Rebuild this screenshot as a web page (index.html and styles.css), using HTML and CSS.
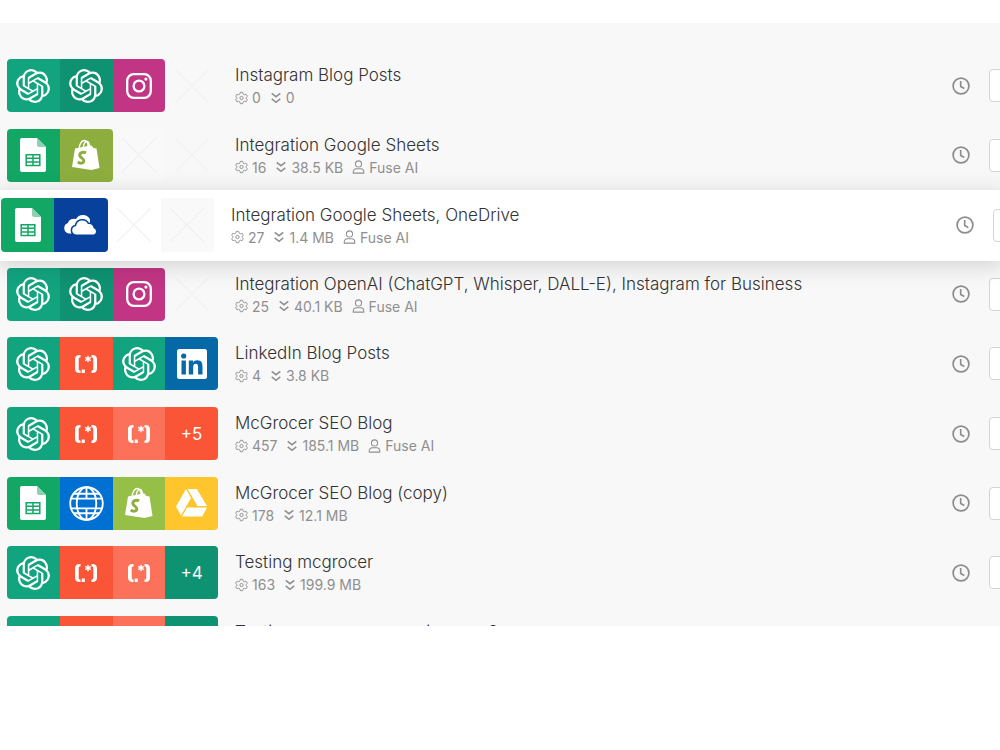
FILE: index.html
```
<!DOCTYPE html>
<html lang="en">
  <head>
    <meta charset="utf-8">
    <title>Scenarios</title>
    <link rel="stylesheet" href="styles.css">
  </head>
  <body>
    <svg class="sprite" aria-hidden="true">
      <symbol id="openai" viewBox="0 0 24 24">
        <path d="M22.28 9.82a5.98 5.98 0 0 0-.52-4.91 6.05 6.05 0 0 0-6.51-2.9A6.07 6.07 0 0 0 4.98 4.18a5.98 5.98 0 0 0-4 2.9 6.05 6.05 0 0 0 .74 7.1 5.98 5.98 0 0 0 .51 4.91 6.05 6.05 0 0 0 6.51 2.9A5.98 5.98 0 0 0 13.26 24a6.06 6.06 0 0 0 5.77-4.21 5.99 5.99 0 0 0 4-2.9 6.06 6.06 0 0 0-.75-7.07zm-9.02 12.61a4.48 4.48 0 0 1-2.88-1.04l.14-.08 4.78-2.76a.8.8 0 0 0 .39-.68v-6.74l2.02 1.17a.07.07 0 0 1 .04.05v5.58a4.5 4.5 0 0 1-4.49 4.5zM3.6 18.3a4.47 4.47 0 0 1-.54-3.01l.14.08 4.78 2.76a.77.77 0 0 0 .78 0l5.84-3.37v2.33a.08.08 0 0 1-.03.06L9.74 19.95a4.5 4.5 0 0 1-6.14-1.65zM2.34 7.9a4.49 4.49 0 0 1 2.37-1.98v5.68a.77.77 0 0 0 .39.68l5.81 3.35-2.02 1.17a.08.08 0 0 1-.07 0l-4.83-2.79A4.5 4.5 0 0 1 2.34 7.87zm16.6 3.86L13.1 8.36 15.12 7.2a.08.08 0 0 1 .07 0l4.83 2.79a4.49 4.49 0 0 1-.68 8.1v-5.68a.79.79 0 0 0-.4-.65zm2.01-3.02l-.14-.09-4.77-2.78a.78.78 0 0 0-.79 0L9.41 9.23V6.9a.07.07 0 0 1 .03-.06l4.83-2.79a4.5 4.5 0 0 1 6.68 4.66zM8.31 12.86l-2.02-1.16a.08.08 0 0 1-.04-.06V6.07a4.5 4.5 0 0 1 7.38-3.45l-.14.08L8.7 5.46a.8.8 0 0 0-.39.68zm1.1-2.36L12.01 9l2.61 1.5v3L12.02 15l-2.61-1.5z"/>
      </symbol>
      <symbol id="instagram" viewBox="0 0 26 26">
        <rect x="1.2" y="1.2" width="23.6" height="23.6" rx="6.5" fill="none" stroke="#fff" stroke-width="2.3"/>
        <circle cx="13" cy="13" r="5.4" fill="none" stroke="#fff" stroke-width="2.3"/>
        <circle cx="19.9" cy="6.1" r="1.6"/>
      </symbol>
      <symbol id="sheets" viewBox="0 0 26 34">
        <path d="M2 0h15l9 9v23a2 2 0 0 1-2 2H2a2 2 0 0 1-2-2V2a2 2 0 0 1 2-2z"/>
        <path d="M17 0l9 9h-7a2 2 0 0 1-2-2z" fill="#8ed1b1"/>
        <path d="M6.2 16.7h13.6v10.8H6.2zM6.2 20.3h13.6M6.2 23.9h13.6M13 16.7v10.8" fill="none" stroke="#12a765" stroke-width="1.5"/>
      </symbol>
      <symbol id="shopify" viewBox="0 0 28 32">
        <path d="M3 9.5l16.2-3.3L21.5 9l3 .5L27.5 29l-8 2L0 28z"/>
        <path d="M7 9.5C7.5 4.5 10 1.5 12.2 1.5c2.4 0 3.8 3 4 6.2M11.2 8.5c.5-4 2.2-6 3.8-6s2.3 2.6 2.4 5" fill="none" stroke="#fff" stroke-width="1.4"/>
        <path d="M14 13.8c-3.2-1.6-6.4 0-6.2 2.6.2 2.7 4.2 2.9 4 5.6-.2 2.5-3.6 2.8-6 1" fill="none" stroke="#8dae3f" stroke-width="3"/>
      </symbol>
      <symbol id="onedrive" viewBox="0 0 36 22">
        <path d="M5.5 19.5A5.5 5.5 0 0 1 4.8 9 6.5 6.5 0 0 1 13 5 8 8 0 0 1 27 5.5v8l-10 6z"/>
        <path d="M13 21.2a4.9 4.9 0 0 1-.6-9.7 7 7 0 0 1 13-2.2 5.4 5.4 0 0 1 5.8 4.2 4.1 4.1 0 0 1-.2 7.7z" stroke="#07419c" stroke-width="1.5"/>
      </symbol>
      <symbol id="regex" viewBox="0 0 24 18">
        <path d="M6.5 0v2.6c-1.4 0-1.8.6-1.8 2v8.8c0 1.400.4 2 1.800 2V18C2.700 18 1 16.800 1 13.500v-9C1 1.200 2.700 0 6.500 0zM17.500 0v2.600c1.400 0 1.800.6 1.800 2v8.800c0 1.400-.4 2-1.800 2V18c3.800 0 5.500-1.200 5.500-4.500v-9C23 1.200 21.300 0 17.500 0zM7.700 14.500h3.100V18H7.700z"/>
        <path d="M14 .8v6.400M11.200 2.400l5.600 3.200M16.800 2.400l-5.600 3.200" stroke="#fff" stroke-width="1.400"/>
      </symbol>
      <symbol id="linkedin" viewBox="0 0 30 30">
        <rect width="30" height="30" rx="2.5"/>
        <path d="M4.5 11.5h4.4v14H4.5zM11.8 11.5H16v2c.8-1.4 2.3-2.3 4.3-2.3 4.3 0 5.2 2.8 5.2 6.6v7.7h-4.4v-6.9c0-1.9-.2-3.8-2.4-3.8s-2.5 1.8-2.5 3.7v7h-4.4z" fill="#0568a7"/>
        <circle cx="6.7" cy="7" r="2.6" fill="#0568a7"/>
      </symbol>
      <symbol id="globe" viewBox="0 0 34 34">
        <g fill="none" stroke="#fff" stroke-width="1.8">
          <circle cx="17" cy="17" r="15.8"/>
          <ellipse cx="17" cy="17" rx="9.5" ry="15.8"/>
          <path d="M17 1v11M17 22v11M4.500 7.500h25M1.500 12.200h31M1.500 21.800h31M4.500 26.500h25"/>
        </g>
      </symbol>
      <symbol id="drive" viewBox="0 0 31 28">
        <path d="M10 0L0 17.5 5 26.5 15 9zM11.6 0h9.2L31 17H21.5zM11.2 18.6H31L26.2 27.5H6z"/>
      </symbol>
      <symbol id="cross" viewBox="0 0 32 32">
        <path d="M0 0l32 32M32 0L0 32" fill="none" stroke="#f0f0f0" stroke-width="1"/>
      </symbol>
      <symbol id="gear" viewBox="0 0 16 16">
        <path d="M6.5 1h3l.5 2.2 1.5.9 2.2-.7 1.5 2.6-1.7 1.5v1l1.7 1.5-1.5 2.6-2.2-.7-1.5.9-.5 2.2h-3L6 12.800l-1.500-.9-2.200.7L.8 10l1.700-1.500v-1L.8 6l1.500-2.600 2.200.7L6 3.200z" fill="none" stroke="currentColor" stroke-width="1.1" stroke-linejoin="round"/>
        <circle cx="8" cy="8" r="2" fill="none" stroke="currentColor" stroke-width="1.2"/>
      </symbol>
      <symbol id="transfer" viewBox="0 0 12 14">
        <path d="M1 1.500l5 4 5-4M1 8l5 4 5-4" fill="none" stroke="currentColor" stroke-width="1.800"/>
      </symbol>
      <symbol id="user" viewBox="0 0 14 16">
        <circle cx="7" cy="4.500" r="3.500" fill="none" stroke="currentColor" stroke-width="1.2"/>
        <path d="M1 15v-1.500a3.500 3.500 0 0 1 3.500-3.500h5a3.500 3.500 0 0 1 3.500 3.500V15z" fill="none" stroke="currentColor" stroke-width="1.2"/>
      </symbol>
      <symbol id="clock" viewBox="0 0 18 18">
        <circle cx="9" cy="9" r="7.900" fill="none" stroke="currentColor" stroke-width="1.700"/>
        <path d="M8.700 4v5.500l3.600 2" fill="none" stroke="currentColor" stroke-width="1.600"/>
      </symbol>
    </svg>

    <main class="scenarios">
      <ul class="list" id="list"></ul>
    </main>

    <script src="script.js"></script>
  </body>
</html>
```

FILE: styles.css
```
* {
  box-sizing: border-box;
}

body {
  margin: 0;
  background-color: #fff;
  font-family: Inter, "Liberation Sans", sans-serif;
  color: #333;
}

.sprite {
  display: none;
}

/* the last row is cut by the panel */
.scenarios {
  max-height: 603px;
  margin-top: 23px;
  padding-top: 28px;
  overflow: hidden;
  background-color: #f8f8f8;
}

.list {
  display: grid;
  grid-auto-rows: 1fr;
  height: 626px;
  margin: 0;
  padding: 0;
  list-style: none;
}

.row {
  display: flex;
  align-items: center;
  padding-left: 7px;
}

.row.active {
  position: relative;
  margin: 0 -4px -1px;
  padding-left: 5px;
  background-color: #fff;
  box-shadow: 0 4px 24px rgba(0, 0, 0, 0.16);
}

.apps {
  display: grid;
  grid-template-columns: repeat(4, 1fr);
  flex: none;
  width: 211px;
  height: 53px;
}

.active .apps {
  width: 213px;
  height: 54px;
}

.app {
  display: flex;
  align-items: center;
  justify-content: center;
  color: #fff;
  font-size: 17px;
}

.app svg {
  fill: #fff;
}

.app:first-child {
  border-radius: 4px 0 0 4px;
}

.app.last {
  border-radius: 0 4px 4px 0;
}

.openai { background-color: #12a37f; }
.openai-dark { background-color: #0f9272; }
.instagram { background-color: #c13584; }
.sheets { background-color: #12a765; }
.shopify { background-color: #8dae3f; }
.shopify-light { background-color: #96bf48; }
.onedrive { background-color: #07419c; }
.regex { background-color: #fa5537; }
.regex-light { background-color: #fb7159; }
.linkedin { background-color: #0568a7; }
.globe { background-color: #0070d2; }
.drive { background-color: #ffc52c; }
.empty-light { background-color: #f9f9f9; }

.info {
  flex: 1;
  min-width: 0;
  padding-left: 17px;
}

.title {
  margin: 0;
  font-size: 17px;
  font-weight: 300;
  line-height: 24px;
  white-space: nowrap;
}

.meta {
  display: flex;
  gap: 9px;
  min-height: 21px;
  color: #8f8f8f;
  font-size: 14px;
  line-height: 21px;
}

.meta span {
  display: flex;
  align-items: center;
  gap: 4px;
}

.clock {
  flex: none;
  margin-right: 19px;
  color: #8c8c8c;
}

.toggle {
  flex: none;
  width: 60px;
  height: 33px;
  margin-right: -49px;
  padding: 0;
  border: 1px solid #d4d4d4;
  border-radius: 4px;
  background-color: #fff;
}
```

FILE: script.js
```
const sizes = {
  openai: [34, 34],
  instagram: [26, 26],
  sheets: [26, 34],
  shopify: [28, 32],
  onedrive: [36, 22],
  regex: [24, 18],
  linkedin: [30, 30],
  globe: [35, 35],
  drive: [31, 28],
  cross: [34, 34],
  gear: [13, 14],
  transfer: [12, 12],
  user: [13, 14],
  clock: [18, 18]
};

const scenarios = [
  { title: 'Instagram Blog Posts', apps: ['openai', 'openai-dark', 'instagram', 'empty'], ops: '0', size: '0' },
  { title: 'Integration Google Sheets', apps: ['sheets', 'shopify', 'empty-light', 'empty'], ops: '16', size: '38.5 KB', user: 'Fuse AI' },
  { title: 'Integration Google Sheets, OneDrive', apps: ['sheets', 'onedrive', 'empty', 'empty-light'], ops: '27', size: '1.4 MB', user: 'Fuse AI', active: true },
  { title: 'Integration OpenAI (ChatGPT, Whisper, DALL-E), Instagram for Business', apps: ['openai', 'openai-dark', 'instagram', 'empty'], ops: '25', size: '40.1 KB', user: 'Fuse AI' },
  { title: 'LinkedIn Blog Posts', apps: ['openai', 'regex', 'openai', 'linkedin'], ops: '4', size: '3.8 KB' },
  { title: 'McGrocer SEO Blog', apps: ['openai', 'regex', 'regex-light', 'regex'], more: '+5', ops: '457', size: '185.1 MB', user: 'Fuse AI' },
  { title: 'McGrocer SEO Blog (copy)', apps: ['sheets', 'globe', 'shopify-light', 'drive'], ops: '178', size: '12.1 MB' },
  { title: 'Testing mcgrocer', apps: ['openai', 'regex', 'regex-light', 'openai-dark'], more: '+4', ops: '163', size: '199.9 MB' },
  { title: 'Testing mcgrocer some images 2', apps: ['openai', 'regex', 'regex-light', 'openai-dark'], loading: true }
];

function icon(name) {
  const [w, h] = sizes[name];
  return `<svg width="${w}" height="${h}" aria-hidden="true"><use href="#${name}"></use></svg>`;
}

function tile(app, i, row) {
  const empty = app.startsWith('empty');
  const next = row.apps[i + 1];
  const last = !empty && (!next || next.startsWith('empty'));
  let content = icon(empty ? 'cross' : app.split('-')[0]);
  if (row.more && i === 3) {
    content = row.more;
  }
  if (row.loading) {
    content = '';
  }
  return `<div class="app ${app}${last ? ' last' : ''}">${content}</div>`;
}

function meta(row) {
  if (row.loading) {
    return '';
  }
  return `<span>${icon('gear')}${row.ops}</span>
    <span>${icon('transfer')}${row.size}</span>
    ${row.user ? `<span>${icon('user')}${row.user}</span>` : ''}`;
}

function render(row) {
  return `<li class="row${row.active ? ' active' : ''}">
    <div class="apps">${row.apps.map((app, i) => tile(app, i, row)).join('')}</div>
    <div class="info">
      <h2 class="title">${row.title}</h2>
      <div class="meta">${meta(row)}</div>
    </div>
    <svg class="clock" width="18" height="18" aria-hidden="true"><use href="#clock"></use></svg>
    <button class="toggle" type="button" aria-label="Toggle ${row.title}"></button>
  </li>`;
}

document.getElementById('list').innerHTML = scenarios.map(render).join('');
```
